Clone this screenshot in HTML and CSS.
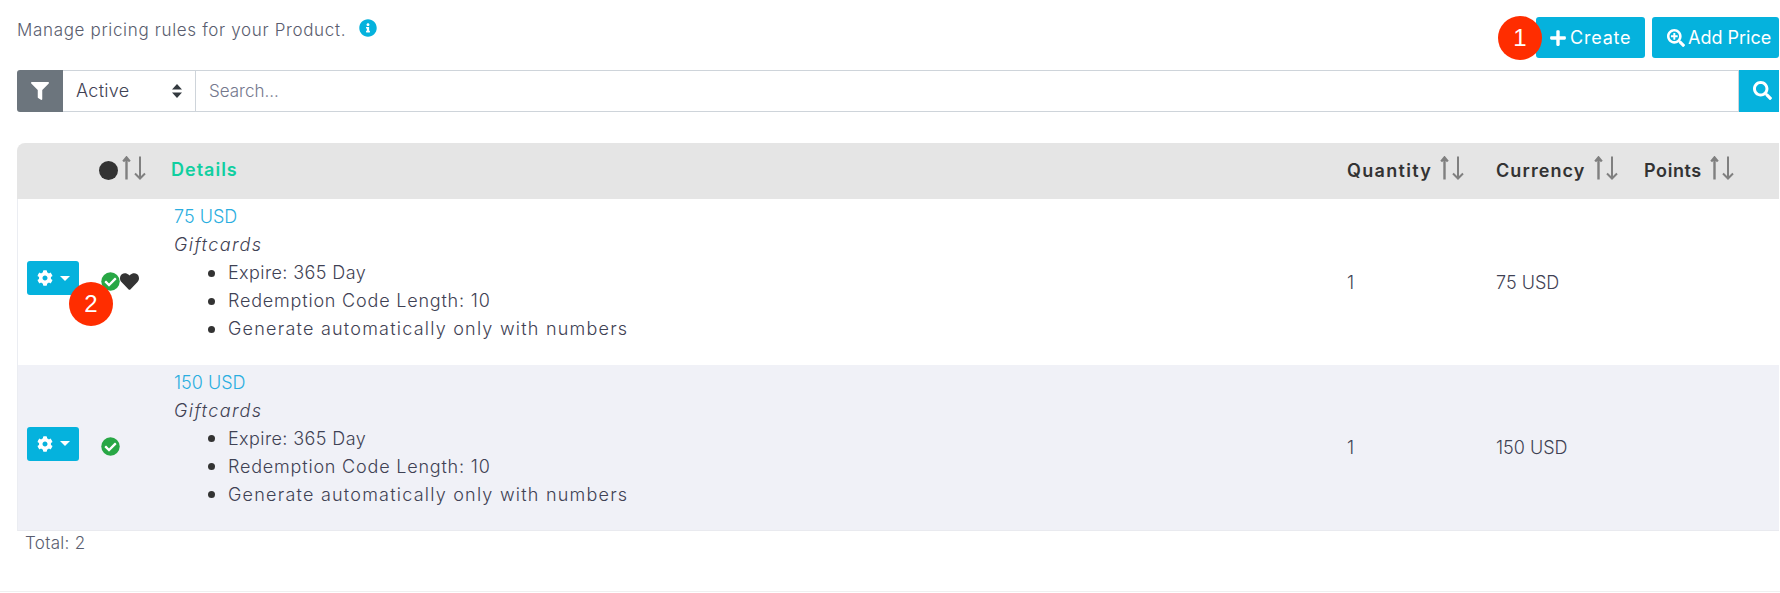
FILE: index.html
```html
<!DOCTYPE html>
<html lang="en">
<head>
<meta charset="utf-8">
<title>Pricing rules</title>
<link rel="stylesheet" href="styles.css">
</head>
<body>
<svg class="sprite" xmlns="http://www.w3.org/2000/svg">
  <symbol id="i-sort" viewBox="0 0 24 24"><path class="sort-up" d="M4.5 23.500V1.500M1.200 5.500l3.300-4 3.300 4"/><path class="sort-down" d="M18 .5v22M13 17.500l5 5 5-5"/></symbol>
  <symbol id="i-check" viewBox="0 0 512 512"><circle cx="256" cy="256" r="248" fill="#28a745"/><path fill="#fff" d="M227.314 387.314l184-184c6.248-6.248 6.248-16.379 0-22.627l-22.627-22.627c-6.248-6.249-16.379-6.249-22.628 0L216 308.118l-70.059-70.059c-6.248-6.248-16.379-6.248-22.628 0l-22.627 22.627c-6.248 6.248-6.248 16.379 0 22.627l104 104c6.249 6.249 16.379 6.249 22.628.001z"/></symbol>
  <symbol id="i-cog" viewBox="0 0 512 512"><path fill="#fff" d="M487.4 315.7l-42.6-24.6c4.3-23.2 4.3-47 0-70.2l42.6-24.6c4.9-2.8 7.1-8.6 5.5-14-11.1-35.6-30-67.8-54.7-94.6-3.8-4.1-10-5.1-14.8-2.3L380.8 110c-17.9-15.4-38.5-27.3-60.8-35.1V25.8c0-5.6-3.9-10.5-9.4-11.7-36.7-8.2-74.3-7.8-109.2 0-5.5 1.2-9.4 6.1-9.4 11.7V75c-22.2 7.9-42.8 19.8-60.8 35.1L88.7 85.5c-4.9-2.8-11-1.9-14.8 2.3-24.7 26.7-43.6 58.9-54.7 94.6-1.7 5.4.6 11.2 5.5 14L67.3 221c-4.3 23.2-4.3 47 0 70.2l-42.6 24.6c-4.9 2.8-7.1 8.6-5.5 14 11.1 35.6 30 67.8 54.7 94.6 3.8 4.1 10 5.1 14.8 2.3l42.6-24.6c17.9 15.4 38.5 27.3 60.8 35.1v49.2c0 5.6 3.9 10.5 9.4 11.7 36.7 8.2 74.3 7.8 109.2 0 5.5-1.2 9.4-6.1 9.4-11.7v-49.2c22.2-7.9 42.8-19.8 60.8-35.1l42.6 24.6c4.9 2.8 11 1.9 14.8-2.3 24.7-26.7 43.6-58.9 54.7-94.6 1.500-5.500-.7-11.300-5.600-14.100zM256 336c-44.100 0-80-35.900-80-80s35.900-80 80-80 80 35.900 80 80-35.900 80-80 80z"/></symbol>
</svg>

<header class="top">
  <p class="intro">Manage pricing rules for your Product.<svg class="icon-info" viewBox="0 0 512 512"><path d="M256 8C119.043 8 8 119.083 8 256c0 136.997 111.043 248 248 248s248-111.003 248-248C504 119.083 392.957 8 256 8zm0 110c23.196 0 42 18.804 42 42s-18.804 42-42 42-42-18.804-42-42 18.804-42 42-42zm56 254c0 6.627-5.373 12-12 12h-88c-6.627 0-12-5.373-12-12v-24c0-6.627 5.373-12 12-12h12v-64h-12c-6.627 0-12-5.373-12-12v-24c0-6.627 5.373-12 12-12h64c6.627 0 12 5.373 12 12v100h12c6.627 0 12 5.373 12 12v24z"/></svg></p>
  <div class="actions">
    <span class="step step-one">1</span>
    <button class="btn btn-create" type="button">
      <svg class="icon-plus" viewBox="0 0 448 512"><path d="M416 208H272V64c0-17.670-14.330-32-32-32h-32c-17.670 0-32 14.330-32 32v144H32c-17.670 0-32 14.330-32 32v32c0 17.670 14.330 32 32 32h144v144c0 17.670 14.330 32 32 32h32c17.670 0 32-14.330 32-32V304h144c17.670 0 32-14.330 32-32v-32c0-17.670-14.330-32-32-32z"/></svg>Create
    </button>
    <button class="btn btn-add" type="button">
      <svg class="icon-zoom" viewBox="0 0 512 512"><path d="M304 192v32c0 6.600-5.400 12-12 12h-56v56c0 6.600-5.400 12-12 12h-32c-6.600 0-12-5.400-12-12v-56h-56c-6.600 0-12-5.400-12-12v-32c0-6.600 5.400-12 12-12h56v-56c0-6.600 5.400-12 12-12h32c6.600 0 12 5.400 12 12v56h56c6.600 0 12 5.400 12 12zm201 284.700L476.700 505c-9.400 9.400-24.600 9.400-33.900 0L343 405.300c-4.500-4.500-7-10.600-7-17V372c-35.300 27.600-79.700 44-128 44C93.100 416 0 322.900 0 208S93.100 0 208 0s208 93.100 208 208c0 48.300-16.400 92.700-44 128h16.300c6.400 0 12.500 2.500 17 7l99.700 99.700c9.300 9.400 9.300 24.600 0 34zM344 208c0-75.200-60.800-136-136-136S72 132.800 72 208s60.800 136 136 136 136-60.800 136-136z"/></svg>Add Price
    </button>
  </div>
</header>

<form class="filter-bar">
  <span class="filter-toggle">
    <svg class="icon-filter" viewBox="0 0 512 512"><path d="M487.976 0H24.028C2.710 0-8.047 25.866 7.058 40.971L192 225.941V432c0 7.831 3.821 15.170 10.237 19.662l80 55.980C298.020 518.690 320 507.493 320 487.980V225.941l184.947-184.970C520.021 25.896 509.338 0 487.976 0z"/></svg>
  </span>
  <span class="status-select">Active
    <svg class="icon-updown" viewBox="0 0 12 14"><path d="M6 0l5 5.500H1zM6 14L1 8.500h10z"/></svg>
  </span>
  <span class="search-input">Search...</span>
  <span class="search-btn">
    <svg class="icon-search" viewBox="0 0 512 512"><path d="M505 442.700L405.300 343c-4.500-4.500-10.600-7-17-7H372c27.600-35.300 44-79.700 44-128C416 93.100 322.900 0 208 0S0 93.100 0 208s93.100 208 208 208c48.300 0 92.700-16.400 128-44v16.300c0 6.400 2.500 12.500 7 17l99.700 99.700c9.400 9.400 24.600 9.400 33.900 0l28.300-28.300c9.400-9.400 9.400-24.600.1-34zM208 336c-70.700 0-128-57.200-128-128 0-70.700 57.200-128 128-128 70.700 0 128 57.200 128 128 0 70.700-57.200 128-128 128z"/></svg>
  </span>
</form>

<table class="prices">
  <colgroup>
    <col class="col-action"><col class="col-status"><col class="col-details"><col class="col-qty"><col class="col-cur"><col class="col-pts">
  </colgroup>
  <thead>
    <tr>
      <th></th>
      <th><span class="th-in"><span class="dot"></span><svg class="sort"><use href="#i-sort"/></svg></span></th>
      <th class="th-details">Details</th>
      <th><span class="th-in th-qty">Quantity<svg class="sort sort-gap"><use href="#i-sort"/></svg></span></th>
      <th><span class="th-in th-cur">Currency<svg class="sort sort-gap"><use href="#i-sort"/></svg></span></th>
      <th><span class="th-in th-points">Points<svg class="sort sort-gap"><use href="#i-sort"/></svg></span></th>
    </tr>
  </thead>
  <tbody>
    <tr>
      <td class="cell-action">
        <button class="gear" type="button"><svg class="icon-cog"><use href="#i-cog"/></svg><span class="caret"></span></button>
        <span class="step step-two">2</span>
      </td>
      <td class="cell-status"><span class="status-icons"><svg class="icon-check"><use href="#i-check"/></svg><svg class="icon-heart" viewBox="0 0 512 512"><path d="M462.300 62.600C407.500 15.900 326 24.300 275.700 76.200L256 96.500l-19.700-20.300C186.100 24.300 104.500 15.900 49.700 62.600c-62.800 53.600-66.100 149.800-9.900 207.900l193.500 199.800c12.500 12.900 32.800 12.900 45.300 0l193.500-199.800c56.300-58.100 53-154.300-9.800-207.900z"/></svg></span></td>
      <td class="cell-details">
        <a class="price-link" href="#">75 USD</a>
        <em class="kind">Giftcards</em>
        <ul class="specs">
          <li class="spec-expire">Expire: 365 Day</li>
          <li class="spec-length">Redemption Code Length: 10</li>
          <li class="spec-auto">Generate automatically only with numbers</li>
        </ul>
      </td>
      <td>1</td>
      <td>75 USD</td>
      <td></td>
    </tr>
    <tr class="row-alt">
      <td class="cell-action">
        <button class="gear" type="button"><svg class="icon-cog"><use href="#i-cog"/></svg><span class="caret"></span></button>
      </td>
      <td class="cell-status"><span class="status-icons"><svg class="icon-check"><use href="#i-check"/></svg></span></td>
      <td class="cell-details">
        <a class="price-link" href="#">150 USD</a>
        <em class="kind">Giftcards</em>
        <ul class="specs">
          <li class="spec-expire">Expire: 365 Day</li>
          <li class="spec-length">Redemption Code Length: 10</li>
          <li class="spec-auto">Generate automatically only with numbers</li>
        </ul>
      </td>
      <td>1</td>
      <td>150 USD</td>
      <td></td>
    </tr>
  </tbody>
</table>
<p class="total">Total: 2</p>
<div class="page-end"></div>
</body>
</html>
```

FILE: styles.css
```css
* { box-sizing: border-box; }
html, body { margin: 0; padding: 0; }
body {
  height: 593px;
  overflow: hidden;
  padding-left: 17px;
  position: relative;
  font-family: Inter, "Open Sans", "Liberation Sans", sans-serif;
  font-weight: 300;
  font-size: 18px;
  color: #3f4254;
  background: #fff;
}
.sprite { display: none; }

.top {
  display: flex;
  justify-content: space-between;
  height: 70px;
}
.intro {
  margin: 19px 0 0;
  line-height: 22px;
  font-size: 17px;
  letter-spacing: 0.66px;
  color: #595d6e;
}
.icon-info { width: 18px; height: 18px; margin-left: 13px; vertical-align: -1px; fill: #05b2dd; }
.actions { display: flex; gap: 7px; padding: 17px 1px 0 0; position: relative; }
.btn {
  height: 41px;
  border: 0;
  border-radius: 3px;
  background: #05b2dd;
  color: #fff;
  font: 400 18px Inter, "Open Sans", sans-serif;
  display: flex;
  align-items: center;
  padding: 0;
}
.btn-create { width: 109px; padding-left: 14px; letter-spacing: 0.8px; }
.btn-add { width: 127px; padding-left: 15px; }
.icon-plus { width: 16px; height: 18px; fill: #fff; margin-right: 4px; }
.icon-zoom { width: 18px; height: 18px; fill: #fff; margin-right: 3px; }

.step {
  position: absolute;
  width: 44px;
  height: 44px;
  border-radius: 50%;
  background: #ff2d00;
  color: #fff;
  font: 400 24px/44px "Liberation Sans", Arial, sans-serif;
  text-align: center;
}
.step-one { left: -38px; top: 16px; }
.step-two { left: 51px; top: 83px; }

.filter-bar { display: flex; height: 42px; margin-right: 1px; }
.filter-toggle {
  width: 46px;
  background: #6c757d;
  border-radius: 3px 0 0 3px;
  display: flex;
  align-items: center;
  justify-content: center;
}
.icon-filter { width: 18px; height: 18px; fill: #fff; }
.status-select {
  width: 133px;
  border: 1px solid #ced4da;
  border-left: 0;
  display: flex;
  align-items: center;
  justify-content: space-between;
  padding: 0 12px 2px 13px;
  letter-spacing: 0.3px;
  color: #3f4254;
}
.icon-updown { width: 12px; height: 14px; fill: #343a40; margin-top: 2px; }
.search-input {
  flex: 1;
  border: 1px solid #ced4da;
  border-left: 0;
  display: flex;
  align-items: center;
  padding-left: 13px;
  font-size: 17px;
  color: #74788d;
}
.search-btn {
  width: 40px;
  background: #05b2dd;
  display: flex;
  align-items: center;
  padding: 0 0 2px 14px;
}
.icon-search { width: 19px; height: 19px; fill: #fff; }

.prices {
  width: 1762px;
  margin-top: 31px;
  table-layout: fixed;
  border-collapse: separate;
  border-spacing: 0;
}
.col-action { width: 71px; }
.col-status { width: 73px; }
.col-details { width: 1186px; }
.col-qty { width: 149px; }
.col-cur { width: 148px; }
.col-pts { width: 135px; }
thead th {
  height: 56px;
  background: #e5e5e5;
  text-align: left;
  padding: 0 0 2px;
  font-weight: 600;
  font-size: 18px;
  letter-spacing: 1px;
  color: #333;
}
thead th:first-child { border-top-left-radius: 8px; }
.th-in { display: flex; align-items: center; }
.th-qty { letter-spacing: 1.3px; }
.th-cur { letter-spacing: 1.1px; }
.th-points { letter-spacing: 0.6px; }
.th-details { color: #10cfa0; padding: 0 0 4px 10px; }
.dot { width: 19px; height: 19px; border-radius: 50%; background: #333; margin-left: 11px; margin-right: 4px; }
.sort { width: 24px; height: 24px; margin-bottom: 4px; }
.sort-gap { margin-left: 8px; }
.sort-up { fill: none; stroke: #808080; stroke-width: 2.4; }
.sort-down { fill: none; stroke: #808080; stroke-width: 2; }

tbody td {
  height: 166px;
  padding: 0;
  vertical-align: middle;
  color: #3f4254;
}
tbody td:first-child { border-left: 1px solid #ebedf2; }
.row-alt td { background: #f0f1f7; border-bottom: 1px solid #e9eaef; }
.cell-action { position: relative; padding: 0 0 8px 9px; }
.gear {
  width: 52px;
  height: 34px;
  border: 0;
  border-radius: 3px;
  background: #05b2dd;
  display: flex;
  align-items: center;
  justify-content: center;
  gap: 7px;
  padding: 0;
}
.icon-cog { width: 16px; height: 16px; }
.caret { width: 0; height: 0; border: 5px solid transparent; border-top-color: #fff; border-bottom: 0; }
.status-icons { display: flex; align-items: center; padding: 0 0 2px 13px; }
.icon-check { width: 19px; height: 19px; }
.icon-heart { width: 19px; height: 19px; fill: #333; }
.cell-details { padding: 0 0 0 13px; line-height: 28px; }
.price-link { display: block; color: #2aaee0; text-decoration: none; }
.kind { display: block; letter-spacing: 1.4px; }
.specs { margin: 0 0 18px; padding-left: 54px; list-style: none; }
.specs li { display: flex; align-items: center; }
.specs li::before {
  content: "";
  flex: none;
  width: 7px;
  height: 7px;
  border-radius: 50%;
  background: #333;
  margin: 0 13px 0 -20px;
}
.spec-expire { letter-spacing: 0.4px; }
.spec-length { letter-spacing: 0.8px; }
.spec-auto { letter-spacing: 1.22px; }
.total { margin: 0; padding-left: 8px; line-height: 24px; font-size: 17px; letter-spacing: 0.3px; color: #595d6e; }
.page-end {
  position: absolute;
  left: 0;
  right: 0;
  top: 591px;
  height: 1px;
  background: #f0f0f0;
}
```
